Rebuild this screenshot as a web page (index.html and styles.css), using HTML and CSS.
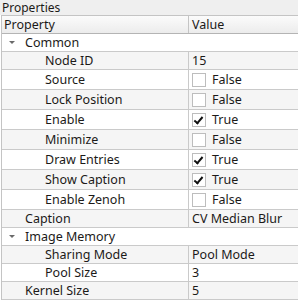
FILE: index.html
```html
<!DOCTYPE html>
<html>
<head>
    <title>Properties</title>
    <link rel="stylesheet" href="styles.css">
</head>
<body>
    <div class="panel">
        <div class="title">Properties</div>
        <div class="tree">
            <div class="header">
                <div class="cell name">Property</div>
                <div class="cell value">Value</div>
            </div>

            <div class="row group">
                <div class="cell name"><span class="arrow"></span>Common</div>
                <div class="cell value"></div>
            </div>
            <div class="row alt">
                <div class="cell name child">Node ID</div>
                <div class="cell value">15</div>
            </div>
            <div class="row tall">
                <div class="cell name child">Source</div>
                <div class="cell value"><span class="check"></span>False</div>
            </div>
            <div class="row tall alt">
                <div class="cell name child">Lock Position</div>
                <div class="cell value"><span class="check"></span>False</div>
            </div>
            <div class="row tall">
                <div class="cell name child">Enable</div>
                <div class="cell value"><span class="check on"></span>True</div>
            </div>
            <div class="row tall alt">
                <div class="cell name child">Minimize</div>
                <div class="cell value"><span class="check"></span>False</div>
            </div>
            <div class="row tall">
                <div class="cell name child">Draw Entries</div>
                <div class="cell value"><span class="check on"></span>True</div>
            </div>
            <div class="row tall alt">
                <div class="cell name child">Show Caption</div>
                <div class="cell value"><span class="check on"></span>True</div>
            </div>
            <div class="row tall">
                <div class="cell name child">Enable Zenoh</div>
                <div class="cell value"><span class="check"></span>False</div>
            </div>
            <div class="row alt">
                <div class="cell name">Caption</div>
                <div class="cell value">CV Median Blur</div>
            </div>

            <div class="row group">
                <div class="cell name"><span class="arrow"></span>Image Memory</div>
                <div class="cell value"></div>
            </div>
            <div class="row alt">
                <div class="cell name child">Sharing Mode</div>
                <div class="cell value">Pool Mode</div>
            </div>
            <div class="row">
                <div class="cell name child">Pool Size</div>
                <div class="cell value">3</div>
            </div>
            <div class="row alt">
                <div class="cell name">Kernel Size</div>
                <div class="cell value">5</div>
            </div>
        </div>
    </div>
</body>
</html>
```

FILE: styles.css
```css
body {
    margin: 0;
    font-family: "Noto Sans", "Open Sans", sans-serif;
    font-size: 12.5px;
    color: #1c1a18;
    background-color: #fff;
}
.panel {
    width: 298px;
    height: 307px;
    overflow: hidden;
    background-color: #fff;
}
.title {
    height: 15px;
    line-height: 15px;
    font-size: 12px;
    padding-left: 2px;
    background-color: #efefef;
}
.tree {
    margin-left: 1px;
    border-left: 1px solid #c4c4c4;
    border-top: 1px solid #c4c4c4;
}
.header,
.row {
    display: flex;
    border-bottom: 1px solid #cacaca;
}
.header {
    height: 17px;
    background: linear-gradient(#fbfbfb, #ececec);
    border-bottom: 1px solid #b4b4b4;
}
.row {
    height: 17px;
}
.row.tall {
    height: 19px;
}
.row.alt {
    background-color: #f5f5f5;
}
.cell {
    display: flex;
    align-items: center;
    white-space: nowrap;
}
.cell.name {
    width: 184px;
    padding-left: 2px;
    border-right: 1px solid #cacaca;
}
.header .cell.name {
    border-right-color: #c4c4c4;
}
.cell.value {
    flex: 1;
    padding-left: 3px;
}
.row .cell.name {
    padding-left: 23px;
    width: 163px;
}
.row .cell.child {
    padding-left: 43px;
    width: 143px;
}
.row.group .cell.name {
    border-right-color: transparent;
}
.arrow {
    width: 0;
    height: 0;
    margin-left: -16px;
    margin-right: 10px;
    border-left: 3.5px solid transparent;
    border-right: 3.5px solid transparent;
    border-top: 3.5px solid #6a6a6a;
}
.check {
    position: relative;
    width: 12px;
    height: 12px;
    margin-right: 6px;
    border: 1px solid #bdbdbd;
    background-color: #fff;
}
.check.on::after {
    content: "";
    position: absolute;
    left: 3px;
    top: 1px;
    width: 3px;
    height: 7px;
    border-right: 2px solid #111;
    border-bottom: 2px solid #111;
    transform: rotate(40deg);
}
```
